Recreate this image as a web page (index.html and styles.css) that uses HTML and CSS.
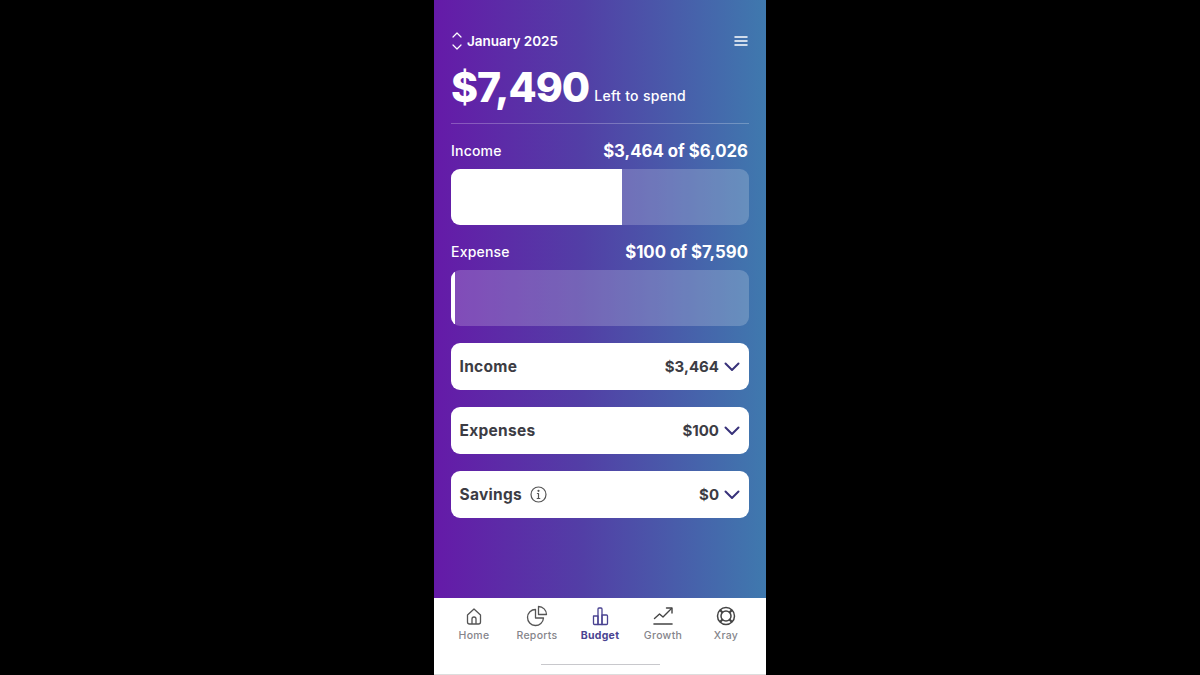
FILE: index.html
```html
<!DOCTYPE html>
<html lang="en">
<head>
  <meta charset="UTF-8" />
  <title>Budget</title>
  <link rel="stylesheet" href="styles.css">
</head>
<body>
  <div class="phone">
    <main class="budget">
      <div class="top-row">
        <div class="month">
          <svg class="updown" width="12" height="20" viewBox="0 0 12 20" fill="none" stroke="#fff" stroke-width="1.2" stroke-linecap="round" stroke-linejoin="round">
            <path d="M2 6l4-4 4 4"/>
            <path d="M2 14l4 4 4-4"/>
          </svg>
          <span>January 2025</span>
        </div>
        <svg class="menu" width="14" height="10" viewBox="0 0 14 10" stroke="#fff" stroke-width="1.5" stroke-linecap="round">
          <path d="M1 1h12M1 5h12M1 9h12"/>
        </svg>
      </div>

      <div class="left">
        <span class="left-amount">$7,490</span>
        <span class="left-label">Left to spend</span>
      </div>
      <div class="divider"></div>

      <div class="stat-row">
        <span class="stat-name">Income</span>
        <span class="stat-value">$3,464 of $6,026</span>
      </div>
      <div class="bar"><div class="bar-fill bar-income"></div></div>

      <div class="stat-row">
        <span class="stat-name">Expense</span>
        <span class="stat-value">$100 of $7,590</span>
      </div>
      <div class="bar"><div class="bar-fill bar-expense"></div></div>

      <div class="cards">
        <div class="card">
          <span class="card-name">Income</span>
          <span class="card-value">$3,464</span>
          <svg class="chevron" width="16" height="10" viewBox="0 0 16 10" fill="none" stroke="#38327a" stroke-width="2" stroke-linecap="round" stroke-linejoin="round"><path d="M1.5 1.5l6.5 6.5 6.5-6.5"/></svg>
        </div>
        <div class="card">
          <span class="card-name">Expenses</span>
          <span class="card-value">$100</span>
          <svg class="chevron" width="16" height="10" viewBox="0 0 16 10" fill="none" stroke="#38327a" stroke-width="2" stroke-linecap="round" stroke-linejoin="round"><path d="M1.5 1.5l6.5 6.5 6.5-6.5"/></svg>
        </div>
        <div class="card">
          <span class="card-name">Savings</span>
          <svg class="info" width="17" height="17" viewBox="0 0 17 17" fill="none" stroke="#555" stroke-width="1.2" stroke-linecap="round">
            <circle cx="8.5" cy="8.5" r="7.5"/>
            <path d="M8.5 7.5v5M7.2 12.5h2.6M7.4 7.5h1.1"/>
            <circle cx="8.5" cy="4.8" r=".5" fill="#555"/>
          </svg>
          <span class="card-value">$0</span>
          <svg class="chevron" width="16" height="10" viewBox="0 0 16 10" fill="none" stroke="#38327a" stroke-width="2" stroke-linecap="round" stroke-linejoin="round"><path d="M1.5 1.5l6.5 6.5 6.5-6.5"/></svg>
        </div>
      </div>
    </main>

    <nav class="tabs">
      <a class="tab">
        <svg width="24" height="24" viewBox="0 0 24 24" fill="none" stroke="#555" stroke-width="1.3" stroke-linejoin="round">
          <path d="M5.5 11l6.5-6 6.5 6v7a2 2 0 0 1-2 2h-9a2 2 0 0 1-2-2z"/>
          <path d="M10 20v-5a2 2 0 0 1 4 0v5"/>
        </svg>
        <span>Home</span>
      </a>
      <a class="tab">
        <svg width="24" height="24" viewBox="0 0 24 24" fill="none" stroke="#555" stroke-width="1.3" stroke-linejoin="round">
          <path d="M10.5 5.5a8 8 0 1 0 8 8.500h-8z"/>
          <path d="M13.5 2.5a8 8 0 0 1 8 8h-8z"/>
        </svg>
        <span>Reports</span>
      </a>
      <a class="tab tab-active">
        <svg width="24" height="24" viewBox="0 0 24 24" fill="none" stroke="#4a4391" stroke-width="1.3" stroke-linejoin="round">
          <path d="M5.5 12H10v8.500H6.500a1 1 0 0 1-1-1z"/>
          <path d="M10 5a1 1 0 0 1 1-1h2a1 1 0 0 1 1 1v15.500h-4z"/>
          <path d="M14 11h4.500a1 1 0 0 1 1 1v7.500a1 1 0 0 1-1 1H14z"/>
        </svg>
        <span>Budget</span>
      </a>
      <a class="tab">
        <svg width="24" height="24" viewBox="0 0 24 24" fill="none" stroke="#444" stroke-width="1.4" stroke-linecap="round" stroke-linejoin="round">
          <path d="M3.5 14.5l5-4.500 3.500 3 8.500-8.500"/>
          <path d="M15.5 4h5.500v5"/>
          <path d="M3 20h18" stroke-width="1.6"/>
        </svg>
        <span>Growth</span>
      </a>
      <a class="tab">
        <svg width="24" height="24" viewBox="0 0 24 24" fill="none" stroke="#444" stroke-width="1.5">
          <circle cx="12" cy="12" r="8.5"/>
          <circle cx="12" cy="12" r="5"/>
          <path d="M6 6l2.500 2.500M18 6l-2.500 2.500M6 18l2.500-2.500M18 18l-2.500-2.500" stroke-width="2.2"/>
        </svg>
        <span>Xray</span>
      </a>
    </nav>
    <div class="home-bar"><div class="home-line"></div></div>
  </div>
</body>
</html>
```

FILE: styles.css
```css
* {
  box-sizing: border-box;
}

body {
  margin: 0;
  background: #000;
  font-family: Inter, "Noto Sans", sans-serif;
}

.phone {
  width: 332px;
  height: 675px;
  margin: 0 auto;
  display: flex;
  flex-direction: column;
  background: #fff;
  overflow: hidden;
}

.budget {
  height: 598px;
  padding: 31px 17px 0;
  color: #fff;
  background: linear-gradient(90deg, #651aa8 0%, #523fa6 45%, #3f79ae 100%);
}

.top-row {
  display: flex;
  align-items: center;
  justify-content: space-between;
  height: 20px;
}

.month {
  display: flex;
  align-items: center;
  gap: 4px;
  font-size: 13.5px;
  font-weight: 600;
}

.menu {
  margin-right: 1px;
}

.left {
  display: flex;
  align-items: flex-end;
  gap: 5px;
  margin-top: 11px;
  height: 50px;
}

.left-amount {
  font-size: 41px;
  line-height: 50px;
  font-weight: 800;
  letter-spacing: -1px;
}

.left-label {
  margin-bottom: 8px;
  font-size: 14px;
  line-height: 17px;
  font-weight: 500;
  letter-spacing: 0.3px;
}

.divider {
  height: 1px;
  margin-top: 11px;
  background: rgba(255, 255, 255, 0.25);
}

.stat-row {
  display: flex;
  align-items: center;
  justify-content: space-between;
  height: 22px;
  margin-top: 16px;
  margin-bottom: 7px;
  padding-right: 1px;
}

.stat-name {
  margin-bottom: 2px;
  font-size: 14px;
  font-weight: 500;
  letter-spacing: 0.2px;
}

.stat-value {
  font-size: 16.8px;
  font-weight: 700;
}

.bar {
  height: 56px;
  border-radius: 9px;
  overflow: hidden;
  background: rgba(255, 255, 255, 0.2);
}

.bar-fill {
  height: 100%;
  background: #fff;
}

.bar-income {
  width: 57.5%;
}

.bar-expense {
  width: 1.4%;
}

.cards {
  display: flex;
  flex-direction: column;
  gap: 17px;
  margin-top: 17px;
}

.card {
  display: flex;
  align-items: center;
  height: 47px;
  padding: 0 9px 0 8.5px;
  border-radius: 9px;
  background: #fff;
  color: #3c3c44;
}

.card-name {
  font-size: 15.5px;
  font-weight: 700;
  letter-spacing: 0.3px;
}

.card-value {
  margin-left: auto;
  margin-right: 5px;
  font-size: 15px;
  font-weight: 700;
}

.info {
  margin-left: 8px;
}

.tabs {
  display: flex;
  justify-content: space-between;
  padding: 6px 9px 0;
  height: 58px;
}

.tab {
  width: 62px;
  display: flex;
  flex-direction: column;
  align-items: center;
  gap: 1px;
  font-size: 10.5px;
  font-weight: 500;
  letter-spacing: 0.3px;
  color: #85858b;
}

.tab-active {
  color: #4a4391;
  font-weight: 700;
}

.home-bar {
  flex: 1;
  padding-top: 8px;
  border-bottom: 1px solid #ddd;
}

.home-line {
  width: 119px;
  height: 1px;
  margin: 0 auto;
  background: #c8c8cc;
}
```
